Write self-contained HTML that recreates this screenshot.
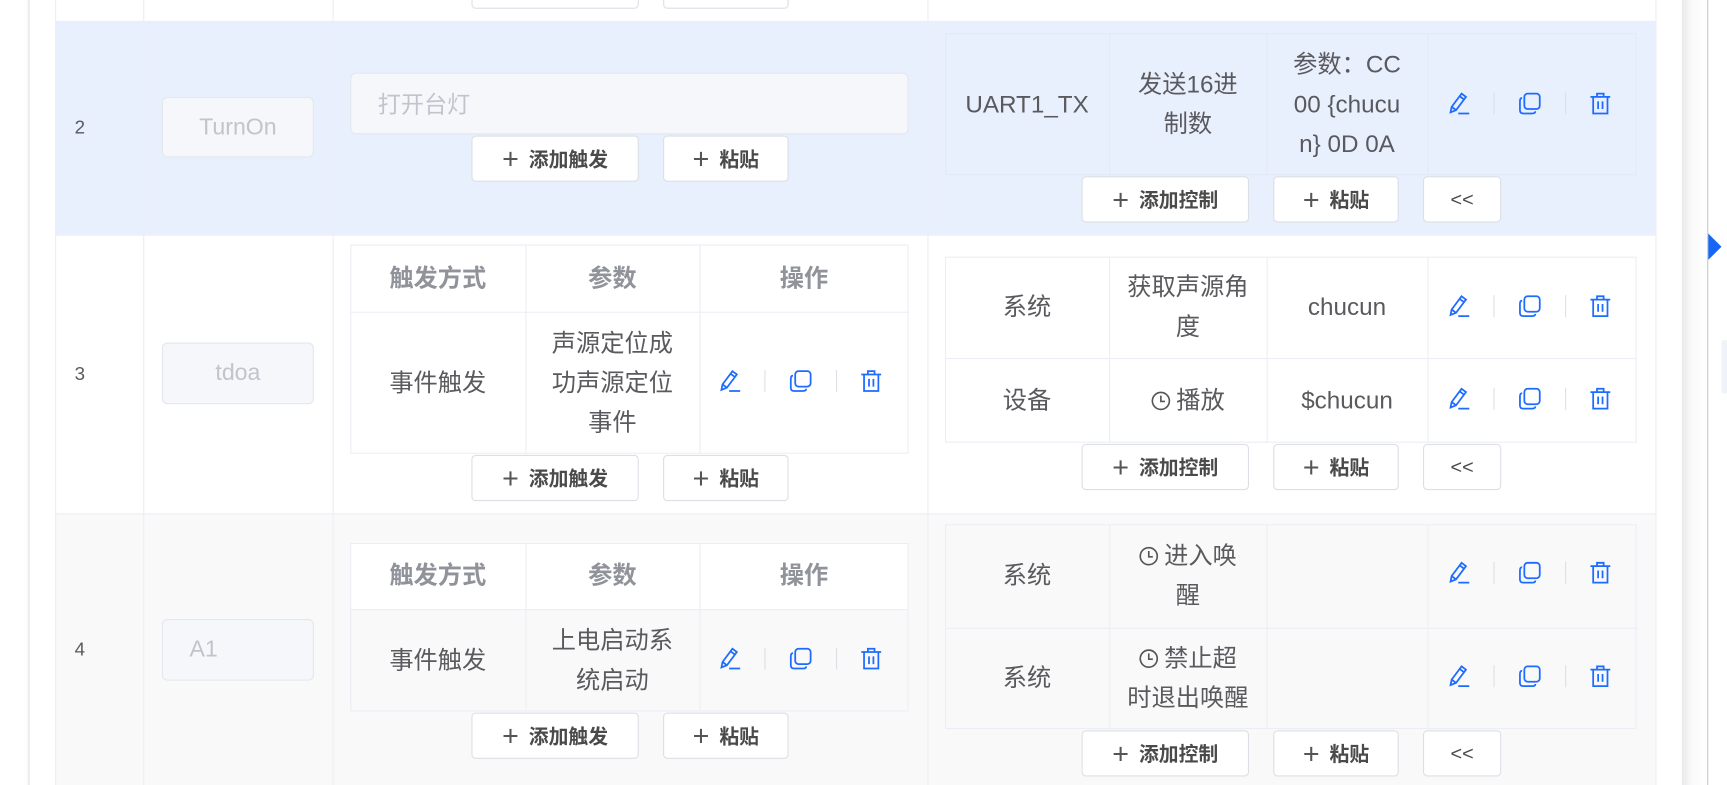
<!DOCTYPE html>
<html><head><meta charset="utf-8">
<style>
html,body{margin:0;padding:0;background:#fff;overflow:hidden;width:1727px;height:785px}
#w{position:absolute;left:0;top:0;width:1568px;height:713px;transform:scale(1.1014);transform-origin:0 0;font-family:"Liberation Sans","Noto Sans CJK SC",sans-serif;color:#5a5a5e}
.a{position:absolute;box-sizing:border-box}
.c{position:absolute;box-sizing:border-box;display:flex;align-items:center;justify-content:center;text-align:center;font-size:22px;line-height:36px}
.vl{position:absolute;width:1px;background:#ebeef5}
.hl{position:absolute;height:1px;background:#ebeef5}
.btn{position:absolute;box-sizing:border-box;background:#fff;border:1px solid #dcdfe6;border-radius:4px;display:flex;align-items:center;justify-content:center;font-size:18px;font-weight:bold;color:#4a4a4a}
.btn .p{font-weight:normal;font-size:26px;margin-right:9px;color:#555;line-height:20px}
.inp{position:absolute;box-sizing:border-box;background:#f5f7fa;border:1px solid #e4e7ed;border-radius:5px;color:#c0c4cc;font-size:21px;display:flex;align-items:center}
.tb{position:absolute;box-sizing:border-box;border:1px solid #ebeef5}
.hd{font-weight:bold;color:#909399}
.ops{position:absolute;display:flex;align-items:center}
.sep{width:1px;height:20px;background:#dcdfe6}
svg{display:block}
</style></head><body><div id="w">
<div class="a" style="left:0;top:0;width:25px;height:713px;background:#fff"></div>
<div class="a" style="left:24px;top:0;width:3px;height:713px;background:linear-gradient(90deg,#fff,#e6e6ea)"></div>
<div class="a" style="left:1503px;top:0;width:1px;height:713px;background:#ededf0"></div>
<div class="a" style="left:1527px;top:0;width:23px;height:713px;background:linear-gradient(90deg,#e9e9ec,#fafafa 40%,#fff)"></div>
<div class="a" style="left:1550px;top:0;width:1px;height:713px;background:#c8c8cc"></div>
<div class="a" style="left:1551px;top:212px;width:0;height:0;border-top:12px solid transparent;border-bottom:12px solid transparent;border-left:12px solid #1766f5"></div>
<div class="a" style="left:1563px;top:309px;width:5px;height:48px;background:#f0f3fa"></div>

<div class="a" style="left:50px;top:19px;width:1453px;height:194px;background:#e8effd"></div>
<div class="a" style="left:50px;top:466px;width:1453px;height:247px;background:#f9f9fa"></div>
<div class="vl" style="left:50px;top:0;height:713px"></div>
<div class="vl" style="left:130px;top:0;height:713px"></div>
<div class="vl" style="left:302px;top:0;height:713px"></div>
<div class="vl" style="left:842px;top:0;height:713px"></div>
<div class="hl" style="left:50px;top:19px;width:1453px"></div>
<div class="hl" style="left:50px;top:213px;width:1453px"></div>
<div class="hl" style="left:50px;top:466px;width:1453px"></div>

<div class="btn" style="left:428px;top:-34px;width:152px;height:42px"></div>
<div class="btn" style="left:602px;top:-34px;width:114px;height:42px"></div>

<!-- ROW 2 -->
<div class="c" style="left:50px;top:19px;width:45px;height:194px;font-size:17px">2</div>
<div class="inp" style="left:147px;top:88px;width:138px;height:55px;justify-content:center">TurnOn</div>
<div class="inp" style="left:318px;top:66px;width:507px;height:56px;padding-left:24px">打开台灯</div>
<div class="btn" style="left:428px;top:123px;width:152px;height:42px"><span class="p">+</span>添加触发</div>
<div class="btn" style="left:602px;top:123px;width:114px;height:42px"><span class="p">+</span>粘贴</div>
<div class="tb" style="left:858px;top:30px;width:628px;height:129px;border-color:#e3e9f8"></div>
<div class="vl" style="left:1007px;top:30px;height:129px;background:#e3e9f8"></div>
<div class="vl" style="left:1150px;top:30px;height:129px;background:#e3e9f8"></div>
<div class="vl" style="left:1296px;top:30px;height:129px;background:#e3e9f8"></div>
<div class="c" style="left:858px;top:30px;width:149px;height:129px">UART1_TX</div>
<div class="c" style="left:1007px;top:30px;width:143px;height:129px"><div>发送16进<br>制数</div></div>
<div class="c" style="left:1150px;top:30px;width:146px;height:129px"><div style="white-space:nowrap">参数：CC<br>00 {chucu<br>n} 0D 0A</div></div>
<div class="ops" style="left:1314px;top:82px" data-o></div>
<div class="btn" style="left:982px;top:160px;width:152px;height:42px"><span class="p">+</span>添加控制</div>
<div class="btn" style="left:1156px;top:160px;width:114px;height:42px"><span class="p">+</span>粘贴</div>
<div class="btn" style="left:1292px;top:160px;width:71px;height:42px;font-weight:normal">&lt;&lt;</div>

<!-- ROW 3 -->
<div class="c" style="left:50px;top:213px;width:45px;height:253px;font-size:17px">3</div>
<div class="inp" style="left:147px;top:311px;width:138px;height:56px;justify-content:center">tdoa</div>
<div class="tb" style="left:318px;top:222px;width:507px;height:190px;background:#fff"></div>
<div class="hl" style="left:318px;top:283px;width:507px"></div>
<div class="vl" style="left:477px;top:222px;height:190px"></div>
<div class="vl" style="left:635px;top:222px;height:190px"></div>
<div class="c hd" style="left:318px;top:222px;width:159px;height:61px">触发方式</div>
<div class="c hd" style="left:477px;top:222px;width:158px;height:61px">参数</div>
<div class="c hd" style="left:635px;top:222px;width:190px;height:61px">操作</div>
<div class="c" style="left:318px;top:283px;width:159px;height:129px">事件触发</div>
<div class="c" style="left:477px;top:283px;width:158px;height:129px"><div>声源定位成<br>功声源定位<br>事件</div></div>
<div class="ops" style="left:652px;top:334px" data-o></div>
<div class="btn" style="left:428px;top:413px;width:152px;height:42px"><span class="p">+</span>添加触发</div>
<div class="btn" style="left:602px;top:413px;width:114px;height:42px"><span class="p">+</span>粘贴</div>

<div class="tb" style="left:858px;top:233px;width:628px;height:169px;background:#fff"></div>
<div class="hl" style="left:858px;top:325px;width:628px"></div>
<div class="vl" style="left:1007px;top:233px;height:169px"></div>
<div class="vl" style="left:1150px;top:233px;height:169px"></div>
<div class="vl" style="left:1296px;top:233px;height:169px"></div>
<div class="c" style="left:858px;top:233px;width:149px;height:92px">系统</div>
<div class="c" style="left:1007px;top:233px;width:143px;height:92px"><div>获取声源角<br>度</div></div>
<div class="c" style="left:1150px;top:233px;width:146px;height:92px">chucun</div>
<div class="ops" style="left:1314px;top:266px" data-o></div>
<div class="c" style="left:858px;top:325px;width:149px;height:77px">设备</div>
<div class="c" style="left:1007px;top:325px;width:143px;height:77px"><span data-k></span>播放</div>
<div class="c" style="left:1150px;top:325px;width:146px;height:77px">$chucun</div>
<div class="ops" style="left:1314px;top:350px" data-o></div>
<div class="btn" style="left:982px;top:403px;width:152px;height:42px"><span class="p">+</span>添加控制</div>
<div class="btn" style="left:1156px;top:403px;width:114px;height:42px"><span class="p">+</span>粘贴</div>
<div class="btn" style="left:1292px;top:403px;width:71px;height:42px;font-weight:normal">&lt;&lt;</div>

<!-- ROW 4 -->
<div class="c" style="left:50px;top:466px;width:45px;height:247px;font-size:17px">4</div>
<div class="inp" style="left:147px;top:562px;width:138px;height:56px;justify-content:flex-start;padding-left:24px">A1</div>
<div class="tb" style="left:318px;top:493px;width:507px;height:153px"></div>
<div class="a" style="left:319px;top:494px;width:505px;height:59px;background:#fff"></div>
<div class="hl" style="left:318px;top:553px;width:507px"></div>
<div class="vl" style="left:477px;top:493px;height:153px"></div>
<div class="vl" style="left:635px;top:493px;height:153px"></div>
<div class="c hd" style="left:318px;top:493px;width:159px;height:60px">触发方式</div>
<div class="c hd" style="left:477px;top:493px;width:158px;height:60px">参数</div>
<div class="c hd" style="left:635px;top:493px;width:190px;height:60px">操作</div>
<div class="c" style="left:318px;top:553px;width:159px;height:93px">事件触发</div>
<div class="c" style="left:477px;top:553px;width:158px;height:93px"><div>上电启动系<br>统启动</div></div>
<div class="ops" style="left:652px;top:586px" data-o></div>
<div class="btn" style="left:428px;top:647px;width:152px;height:42px"><span class="p">+</span>添加触发</div>
<div class="btn" style="left:602px;top:647px;width:114px;height:42px"><span class="p">+</span>粘贴</div>

<div class="tb" style="left:858px;top:476px;width:628px;height:186px"></div>
<div class="hl" style="left:858px;top:570px;width:628px"></div>
<div class="vl" style="left:1007px;top:476px;height:186px"></div>
<div class="vl" style="left:1150px;top:476px;height:186px"></div>
<div class="vl" style="left:1296px;top:476px;height:186px"></div>
<div class="c" style="left:858px;top:476px;width:149px;height:94px">系统</div>
<div class="c" style="left:1007px;top:476px;width:143px;height:94px"><div style="white-space:nowrap"><span data-k></span>进入唤<br>醒</div></div>
<div class="ops" style="left:1314px;top:508px" data-o></div>
<div class="c" style="left:858px;top:570px;width:149px;height:92px">系统</div>
<div class="c" style="left:1007px;top:570px;width:143px;height:92px"><div style="white-space:nowrap"><span data-k></span>禁止超<br>时退出唤醒</div></div>
<div class="ops" style="left:1314px;top:602px" data-o></div>
<div class="btn" style="left:982px;top:663px;width:152px;height:42px"><span class="p">+</span>添加控制</div>
<div class="btn" style="left:1156px;top:663px;width:114px;height:42px"><span class="p">+</span>粘贴</div>
<div class="btn" style="left:1292px;top:663px;width:71px;height:42px;font-weight:normal">&lt;&lt;</div>
</div>
<script>
var ops='<svg width="22" height="24" viewBox="0 0 22 24" fill="none" stroke="#1e6bff" stroke-width="1.6"><path d="M13 3 L17 6 L8 18 L3 20 L4 15 Z M11.5 5.5 L15.5 8.5 M4 15 L8 18"/><path d="M10 21 H20"/></svg>'+
'<div class="sep" style="margin-left:20px"></div>'+
'<svg style="margin-left:20px" width="24" height="24" viewBox="0 0 24 24" fill="none" stroke="#1e6bff" stroke-width="1.6"><rect x="7" y="3" width="14" height="14" rx="3"/><path d="M5 7 Q3 7 3 10 V18 Q3 21 6 21 H14 Q17 21 17 19"/></svg>'+
'<div class="sep" style="margin-left:20px"></div>'+
'<svg style="margin-left:20px" width="22" height="24" viewBox="0 0 22 24" fill="none" stroke="#1e6bff" stroke-width="1.6"><path d="M2 6 H20 M8 6 V3 H14 V6 M4.5 6 V21 H17.5 V6 M9 10 V17 M13 10 V17"/></svg>';
document.querySelectorAll('[data-o]').forEach(function(e){e.innerHTML=ops;});
document.querySelectorAll('[data-k]').forEach(function(e){e.outerHTML='<svg style="display:inline-block;vertical-align:-2px;margin-right:5px" width="18" height="18" viewBox="0 0 17 17" fill="none" stroke="#555" stroke-width="1.4"><circle cx="8.5" cy="8.5" r="7.3"/><path d="M8.5 4 V9 H12"/></svg>';});
</script>
</body></html>
